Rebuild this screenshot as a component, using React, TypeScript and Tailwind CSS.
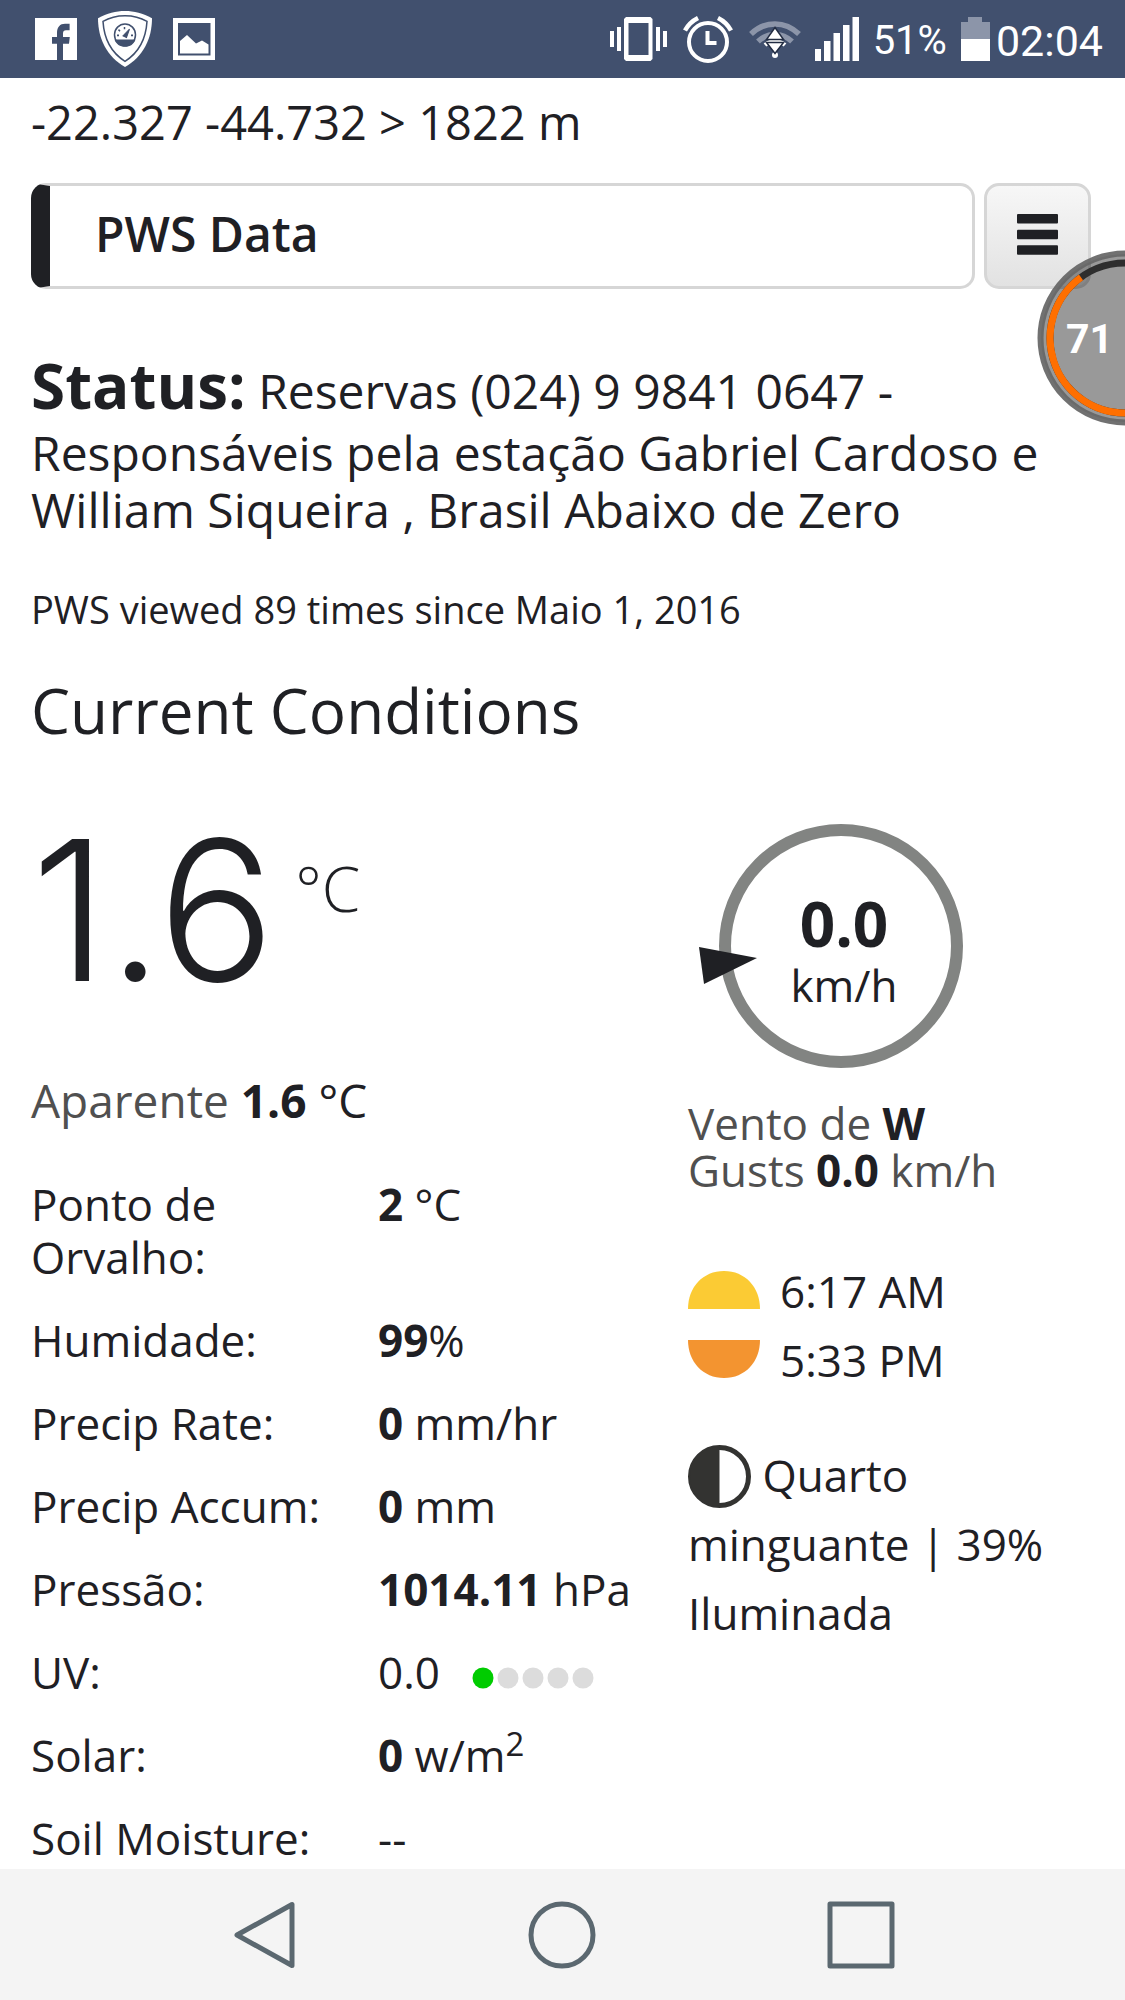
import React from "react";

type Reading = {
  label: string;
  value: string;
  unit?: string;
  squared?: boolean;
  light?: boolean;
  scale?: boolean;
};

const readings: Reading[] = [
  { label: "Ponto de Orvalho:", value: "2", unit: " °C" },
  { label: "Humidade:", value: "99", unit: "%" },
  { label: "Precip Rate:", value: "0", unit: " mm/hr" },
  { label: "Precip Accum:", value: "0", unit: " mm" },
  { label: "Pressão:", value: "1014.11", unit: " hPa" },
  { label: "UV:", value: "0.0", light: true, scale: true },
  { label: "Solar:", value: "0", unit: " w/m", squared: true },
  { label: "Soil Moisture:", value: "--", light: true },
];

const FacebookIcon = () => (
  <svg width="42" height="42" viewBox="0 0 42 42" fill="#fff">
    <path
      fillRule="evenodd"
      d="M0 0H42V42H28V25.7H34L34.8 19H28V15.5C28 13.3 29 12.3 31 12.3H34.6V5.7H30C25 5.7 22 9 22 15V19H17V25.7H22V42H0Z"
    />
  </svg>
);

const ShieldIcon = () => (
  <svg width="54" height="56" viewBox="0 0 54 54" preserveAspectRatio="none">
    <path d="M0 7C9 2 18 0 27 0S45 2 54 7C54 27 45 44 27 54C9 44 0 27 0 7Z" fill="#fff" />
    <path
      d="M5 10C12 6 19 4.500 27 4.500S42 6 49 10C48 26 41 40 27 48.500C13 40 6 26 5 10Z"
      fill="none"
      stroke="#41506e"
      strokeWidth="1.500"
    />
    <circle cx="27" cy="23" r="10.500" fill="#fff" stroke="#41506e" strokeWidth="1.500" />
    <path d="M16.500 27.500H37.500C36 32 32 34.500 27 34.500S18 32 16.500 27.500Z" fill="#41506e" />
    <path d="M25 24L31.500 17.500L28.500 25.500Z" fill="#41506e" stroke="#41506e" />
    <path
      d="M19 23.500h2M20.500 18l1.500 1.500M26.500 15.500v2M33 23.500h2"
      stroke="#41506e"
      strokeWidth="1.500"
    />
  </svg>
);

const PhotoIcon = () => (
  <svg width="42" height="42" viewBox="0 0 42 42" fill="#fff">
    <path fillRule="evenodd" d="M0 0H42V42H0ZM5 5V37.500H37.500V5Z" />
    <path d="M7 35.500V23L14 17L23 25.500L29 22.500L35.500 26.500V35.500Z" />
  </svg>
);

const VibrateIcon = () => (
  <svg width="57" height="44" viewBox="0 0 57 44" fill="#fff">
    <path fillRule="evenodd" d="M16 0H40.500L42.500 2V42L40.500 44H16L14 42V2ZM18.500 6V38H38.500V6Z" />
    <path d="M0 14h4v16h-4zM7 10h4v24h-4zM46 10h4v24h-4zM53 14h4v16h-4z" />
  </svg>
);

const AlarmIcon = () => (
  <svg width="50" height="47" viewBox="0 0 50 47" fill="none" stroke="#fff">
    <circle cx="25" cy="26" r="19" strokeWidth="4" />
    <path d="M24.500 15V27H33.500" strokeWidth="4" />
    <path d="M2 14.500C5 9 9 5 15 2M35 2C41 5 45 9 48 14.500" strokeWidth="4.500" />
  </svg>
);

const WifiIcon = () => (
  <svg width="52" height="38" viewBox="0 0 52 38">
    <g fill="none" stroke="#8c95a9" strokeWidth="5.500">
      <path d="M2 14C16 .5 36 .5 50 14" />
      <path d="M9 21.500C19 12 33 12 43 21.500" />
    </g>
    <path d="M16 25C22 19.500 30 19.500 36 25" fill="none" stroke="#fff" strokeWidth="4" />
    <circle cx="26" cy="35" r="3" fill="#fff" />
    <path
      d="M26 7.500L34.500 19.500H17.500ZM17.500 22.500H34.500L26 33.500Z"
      fill="#fff"
      stroke="#222c42"
      strokeWidth="1.500"
    />
  </svg>
);

const SignalIcon = () => (
  <svg width="44" height="44" viewBox="0 0 44 44" fill="#fff">
    <path d="M0 32h6v12h-6zM9 24h6.500v20h-6.500zM18.500 16h6.500v28h-6.500zM28 8h6.500v36h-6.500zM37.500 0h6.500v44h-6.500z" />
  </svg>
);

const BatteryIcon = () => (
  <svg width="29" height="44" viewBox="0 0 29 44">
    <path d="M7 0H21V5H29V22H0V5H7Z" fill="#8c95a9" />
    <path d="M0 22H29V44H0Z" fill="#fff" />
  </svg>
);

const StatusBar = () => (
  <header className="flex h-[78px] shrink-0 items-center justify-between bg-[#41506e] pr-[22px] pl-[35px] text-white">
    <div className="flex items-center gap-[21px]">
      <FacebookIcon />
      <ShieldIcon />
      <PhotoIcon />
    </div>
    <div className="flex items-center gap-[14px] font-['Roboto',sans-serif]">
      <div className="flex items-center gap-4">
        <VibrateIcon />
        <AlarmIcon />
        <WifiIcon />
      </div>
      <SignalIcon />
      <span className="pt-1 text-[40px] leading-none">51%</span>
      <div className="flex items-center gap-[6px]">
        <BatteryIcon />
        <span className="pt-1 text-[43px] leading-none">02:04</span>
      </div>
    </div>
  </header>
);

const UvScale = () => (
  <svg width="122" height="22" viewBox="0 0 122 22" className="ml-8 inline-block align-baseline">
    {[0, 1, 2, 3, 4].map((i) => (
      <circle key={i} cx={11 + i * 25} cy="11" r="10.500" fill={i === 0 ? "#00cc00" : "#dcdcdc"} />
    ))}
  </svg>
);

const WindDial = () => (
  <div className="relative ml-[11px] h-[244px] w-[264px]">
    <svg width="264" height="244" viewBox="0 0 264 244">
      <circle cx="142" cy="122" r="116" fill="none" stroke="#828482" strokeWidth="12" />
      <path d="M0 123L58 134L5 160Z" fill="#1f2024" />
    </svg>
    <div className="absolute inset-0 flex flex-col items-center justify-center pt-[10px] pl-[26px]">
      <strong className="text-[62px] leading-[68px] font-bold">0.0</strong>
      <span className="text-[44px] leading-[56px]">km/h</span>
    </div>
  </div>
);

const FloatingMeter = () => (
  <div className="absolute top-[250px] right-0 h-[176px] w-[88px]">
    <svg width="88" height="176" viewBox="0 0 88 176" fill="none">
      <circle cx="88" cy="88" r="84" fill="#000" fillOpacity="0.4" />
      <circle cx="88" cy="88" r="84.500" stroke="#666" strokeOpacity="0.930" strokeWidth="6" />
      <circle cx="88" cy="88" r="75" stroke="#2e2e2e" strokeWidth="7" />
      <path d="M44 27.300A75 75 0 0 0 88 163" stroke="#ff6f00" strokeWidth="7" />
    </svg>
    <span className="absolute inset-y-0 right-3 flex items-center pt-1 font-['Roboto',sans-serif] text-[41px] font-bold text-white">
      71
    </span>
  </div>
);

const NavBar = () => (
  <nav className="grid h-[131px] shrink-0 grid-cols-3 items-center bg-[#f4f4f4] px-[115px]">
    <button aria-label="Back" className="flex justify-center">
      <svg width="68" height="68" viewBox="0 0 68 68" fill="none" stroke="#5b6870" strokeWidth="5" strokeLinejoin="round">
        <path d="M7 34L62 3.500V64.500Z" />
      </svg>
    </button>
    <button aria-label="Home" className="flex justify-center">
      <svg width="68" height="68" viewBox="0 0 68 68" fill="none" stroke="#5b6870" strokeWidth="5">
        <circle cx="34" cy="34" r="31" />
      </svg>
    </button>
    <button aria-label="Recent apps" className="flex justify-center">
      <svg width="68" height="68" viewBox="0 0 68 68" fill="none" stroke="#5b6870" strokeWidth="5" strokeLinejoin="round">
        <rect x="3" y="3" width="62" height="62" />
      </svg>
    </button>
  </nav>
);

const App = () => {
  return (
    <div className="relative flex h-screen flex-col overflow-hidden bg-white font-['Open_Sans',sans-serif] text-[#1f2024]">
      <StatusBar />
      <main className="min-h-0 flex-1 overflow-y-auto pt-4 pr-[34px] pl-[31px] [scrollbar-width:none]">
        <p className="text-[47px] leading-[56px]">-22.327 -44.732 &gt; 1822 m</p>

        <div className="mt-[33px] flex h-[106px] gap-[9px]">
          <h1 className="flex flex-1 items-center rounded-[15px] border-3 border-l-[19px] border-[#d6d6d6] border-l-[#1f2024] pb-1 pl-[45px] text-[48px] font-semibold">
            PWS Data
          </h1>
          <button
            aria-label="Menu"
            className="flex w-[107px] items-center justify-center rounded-[15px] border-3 border-[#d6d6d6] bg-linear-to-b from-[#f7f7f7] to-[#e2e2e2] pb-1"
          >
            <svg width="41" height="41" viewBox="0 0 41 41" fill="#1f2024">
              <rect width="41" height="9.500" rx="1" />
              <rect y="15.700" width="41" height="9.500" rx="1" />
              <rect y="31.300" width="41" height="9.500" rx="1" />
            </svg>
          </button>
        </div>

        <p className="mt-[57px] text-[48px] leading-[57px]">
          <strong className="text-[62px] leading-[78px] font-bold">Status:</strong> Reservas (024) 9
          9841 0647 - Responsáveis pela estação Gabriel Cardoso e William Siqueira , Brasil Abaixo
          de Zero
        </p>
        <p className="mt-[49px] text-[38px] leading-[44px]">
          PWS viewed 89 times since Maio 1, 2016
        </p>

        <h2 className="mt-[43px] text-[62px] leading-[72px]">Current Conditions</h2>

        <div className="mt-14 flex">
          <section className="w-[657px] shrink-0">
            <div className="flex items-start">
              <span className="pt-2 font-['Inter',sans-serif] text-[195px] leading-[200px] font-light">
                1.6
              </span>
              <span className="mt-[50px] ml-5 text-[62px] leading-[72px] font-light">°C</span>
            </div>
            <p className="mt-[62px] text-[46px] leading-[56px]">
              <span className="text-[#505050]">Aparente</span>{" "}
              <strong className="font-bold">1.6</strong> °C
            </p>
            <table className="mt-[35px] w-full text-left text-[44px] leading-[53px]">
              <tbody>
                {readings.map((item) => (
                  <tr key={item.label} className="align-top">
                    <th scope="row" className="w-[347px] py-[15px] font-normal">
                      {item.label}
                    </th>
                    <td className="py-[15px] whitespace-pre">
                      {item.light ? item.value : <strong className="font-bold">{item.value}</strong>}
                      {item.unit}
                      {item.squared && <sup className="text-[33px] leading-none">2</sup>}
                      {item.scale && <UvScale />}
                    </td>
                  </tr>
                ))}
              </tbody>
            </table>
          </section>

          <section className="min-w-0 flex-1 pt-[22px] text-[44px]">
            <WindDial />
            <p className="mt-8 leading-[47px] text-[#505050]">
              Vento de <strong className="font-bold text-[#1f2024]">W</strong>
              <br />
              Gusts <strong className="font-bold text-[#1f2024]">0.0</strong> km/h
            </p>
            <div className="mt-[63px] leading-[69px]">
              <div className="flex items-center gap-5">
                <svg width="72" height="38" viewBox="0 0 72 38" className="mb-1">
                  <path d="M0 38C0 16 15 0 36 0S72 16 72 38Z" fill="#fbcb34" />
                </svg>
                6:17 AM
              </div>
              <div className="flex items-center gap-5">
                <svg width="72" height="38" viewBox="0 0 72 38" className="mb-1">
                  <path d="M0 0C0 22 15 38 36 38S72 22 72 0Z" fill="#f39430" />
                </svg>
                5:33 PM
              </div>
            </div>
            <p className="mt-[46px] leading-[69px]">
              <svg width="63" height="63" viewBox="0 0 63 63" className="inline-block align-[-16px]">
                <circle cx="31.500" cy="31.500" r="29" fill="#fff" stroke="#333331" strokeWidth="5" />
                <path d="M31.500 2A29.500 29.500 0 0 0 31.500 61Z" fill="#333331" />
              </svg>{" "}
              Quarto minguante | 39% Iluminada
            </p>
          </section>
        </div>
      </main>
      <NavBar />
      <FloatingMeter />
    </div>
  );
};

export default App;
